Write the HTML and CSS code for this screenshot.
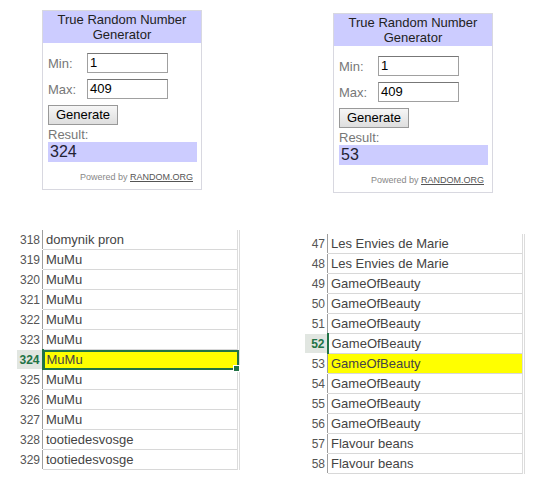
FILE: index.html
```html
<!DOCTYPE html>
<html lang="en">
<head>
    <meta charset="UTF-8">
    <title>Random draw results</title>
    <link rel="stylesheet" href="styles.css">
</head>
<body>

    <div class="page">
        <div class="column col-left">
            <div class="widget">
                <div class="widget-head">True Random Number Generator</div>
                <div class="widget-body">
                    <div class="field"><label>Min:</label><span class="input">1</span></div>
                    <div class="field"><label>Max:</label><span class="input">409</span></div>
                    <span class="button">Generate</span>
                    <div class="result-label">Result:</div>
                    <div class="result">324</div>
                    <div class="powered">Powered by <u>RANDOM.ORG</u></div>
                </div>
            </div>

            <table class="sheet">
                <tr><td class="num">318</td><td class="cell">domynik pron</td></tr>
                <tr><td class="num">319</td><td class="cell">MuMu</td></tr>
                <tr><td class="num">320</td><td class="cell">MuMu</td></tr>
                <tr><td class="num">321</td><td class="cell">MuMu</td></tr>
                <tr><td class="num">322</td><td class="cell">MuMu</td></tr>
                <tr><td class="num">323</td><td class="cell">MuMu</td></tr>
                <tr><td class="num active">324</td><td class="cell winner selected">MuMu<span class="handle"></span></td></tr>
                <tr><td class="num">325</td><td class="cell">MuMu</td></tr>
                <tr><td class="num">326</td><td class="cell">MuMu</td></tr>
                <tr><td class="num">327</td><td class="cell">MuMu</td></tr>
                <tr><td class="num">328</td><td class="cell">tootiedesvosge</td></tr>
                <tr><td class="num">329</td><td class="cell">tootiedesvosge</td></tr>
            </table>
        </div>

        <div class="column col-right">
            <div class="widget">
                <div class="widget-head">True Random Number Generator</div>
                <div class="widget-body">
                    <div class="field"><label>Min:</label><span class="input">1</span></div>
                    <div class="field"><label>Max:</label><span class="input">409</span></div>
                    <span class="button">Generate</span>
                    <div class="result-label">Result:</div>
                    <div class="result">53</div>
                    <div class="powered">Powered by <u>RANDOM.ORG</u></div>
                </div>
            </div>

            <table class="sheet">
                <tr><td class="num">47</td><td class="cell">Les Envies de Marie</td></tr>
                <tr><td class="num">48</td><td class="cell">Les Envies de Marie</td></tr>
                <tr><td class="num">49</td><td class="cell">GameOfBeauty</td></tr>
                <tr><td class="num">50</td><td class="cell">GameOfBeauty</td></tr>
                <tr><td class="num">51</td><td class="cell">GameOfBeauty</td></tr>
                <tr><td class="num active">52</td><td class="cell">GameOfBeauty</td></tr>
                <tr><td class="num">53</td><td class="cell winner">GameOfBeauty</td></tr>
                <tr><td class="num">54</td><td class="cell">GameOfBeauty</td></tr>
                <tr><td class="num">55</td><td class="cell">GameOfBeauty</td></tr>
                <tr><td class="num">56</td><td class="cell">GameOfBeauty</td></tr>
                <tr><td class="num">57</td><td class="cell">Flavour beans</td></tr>
                <tr><td class="num">58</td><td class="cell">Flavour beans</td></tr>
            </table>
        </div>
    </div>

</body>
</html>
```

FILE: styles.css
```css
body {
    margin: 0;
    background: #fff;
    font-family: "Liberation Sans", Arial, sans-serif;
    color: #222;
}
.page {
    display: grid;
    grid-template-columns: 291px 259px;
    height: 492px;
    overflow: hidden;
}
.column {
    display: flex;
    flex-direction: column;
    align-items: flex-start;
}
.col-left {
    padding-top: 10px;
}
.col-right {
    padding-top: 13px;
}

/* random.org widget */
.widget {
    margin-left: 42px;
    width: 158px;
    height: 178px;
    border: 1px solid #d8d8e0;
    background: #fff;
}
.widget-head {
    background: #ccccff;
    text-align: center;
    font-size: 13px;
    line-height: 15px;
    padding: 1px 8px 0;
    height: 31px;
    color: #222;
}
.widget-body {
    padding: 10px 4px 0 5px;
    display: flex;
    flex-direction: column;
    align-items: flex-start;
}
.field {
    display: flex;
    align-items: center;
    margin-bottom: 6px;
}
.field label {
    width: 39px;
    font-size: 13px;
    color: #777;
}
.input {
    box-sizing: border-box;
    width: 81px;
    height: 20px;
    border: 1px solid #a0a0a0;
    border-top-color: #777;
    font-size: 13px;
    line-height: 18px;
    padding-left: 2px;
    color: #000;
}
.button {
    box-sizing: border-box;
    width: 70px;
    height: 20px;
    border: 1px solid #999;
    background: linear-gradient(#f6f6f6, #dedede);
    font-size: 13px;
    line-height: 18px;
    text-align: center;
    color: #000;
}
.result-label {
    font-size: 13px;
    color: #777;
    margin-top: 2px;
    line-height: 15px;
}
.result {
    box-sizing: border-box;
    width: 149px;
    height: 20px;
    background: #ccccff;
    font-size: 16px;
    line-height: 20px;
    padding-left: 2px;
    color: #223;
}
.powered {
    align-self: flex-end;
    margin-top: 10px;
    margin-right: 4px;
    font-size: 9px;
    color: #888;
}
.powered u {
    color: #555;
}

/* spreadsheet excerpt */
.sheet {
    border-collapse: collapse;
    font-size: 13px;
    table-layout: fixed;
}
.col-left .sheet {
    margin: 40px 0 0 17px;
    width: 223px;
}
.col-right .sheet {
    margin: 41px 0 0 14px;
    width: 220px;
}
.sheet td {
    height: 19px;
    padding: 0;
    border-bottom: 1px solid #d8d8d8;
    white-space: nowrap;
}
.num {
    text-align: right;
    padding-right: 2px !important;
    color: #555;
    font-size: 12px;
    border-right: 1px solid #9e9e9e;
    border-bottom-color: #fff !important;
}
.col-left .num {
    width: 23px;
}
.col-right .num {
    width: 20px;
}
.cell {
    color: #444;
    padding-left: 3px !important;
    border-right: 3px double #dcdcdc;
    position: relative;
}
.num.active {
    background: #e1e6e1;
    color: #217346;
    font-weight: bold;
    border-right: 2px solid #217346;
}
.winner {
    background: #ffff00;
}
.selected {
    outline: 2px solid #217346;
    outline-offset: -2px;
}
.handle {
    position: absolute;
    right: -3px;
    bottom: -3px;
    width: 5px;
    height: 5px;
    background: #217346;
    border: 1px solid #fff;
}
```
